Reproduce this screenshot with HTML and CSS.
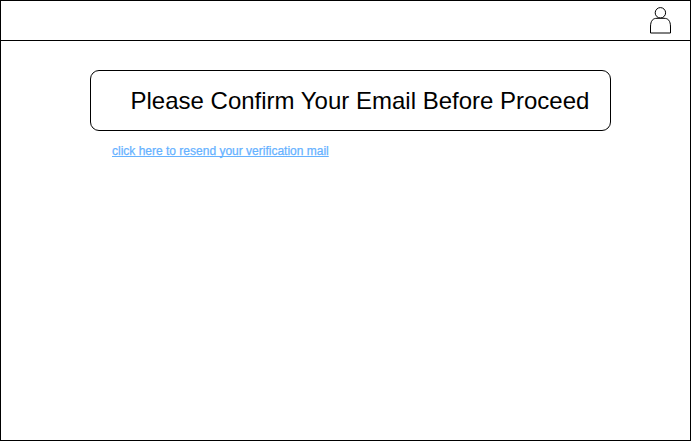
FILE: index.html
```html
<!DOCTYPE html>
<html lang="en">
<head>
<meta charset="utf-8">
<title>Confirm Email</title>
<link rel="stylesheet" href="styles.css">
</head>
<body>
<div class="window">
  <header class="topbar">
    <svg class="user" width="23" height="28" viewBox="0 0 23 28" aria-hidden="true">
      <circle cx="11.4" cy="5.8" r="5.2"/>
      <path d="M1.5 26V20C1.5 13.5 4 11.3 8 11.3H15C19 11.3 21.5 13.5 21.5 20V26Z"/>
    </svg>
  </header>
  <main class="content">
    <h1 class="notice">Please Confirm Your Email Before Proceed</h1>
    <a class="resend" href="#">click here to resend your verification mail</a>
  </main>
</div>
</body>
</html>
```

FILE: styles.css
```css
* { box-sizing: border-box; }
body {
  margin: 0;
  background: #fff;
  color: #000;
  font-family: "Liberation Sans", Arial, sans-serif;
}
.window {
  width: 691px;
  height: 441px;
  border: 1px solid #000;
}
.topbar {
  display: flex;
  justify-content: flex-end;
  height: 40px;
  padding: 6px 18px 0 0;
  border-bottom: 1px solid #000;
}
.user { fill: #fff; stroke: #000; stroke-width: 1; }
.content {
  display: flex;
  flex-direction: column;
  align-items: flex-start;
  padding: 29px 0 0 89px;
}
.notice {
  width: 521px;
  height: 61px;
  margin: 0;
  padding-left: 39.5px;
  border: 1px solid #000;
  border-radius: 9px;
  font-size: 24px;
  font-weight: 400;
  line-height: 59px;
  white-space: nowrap;
}
.resend {
  margin: 13px 0 0 22px;
  color: #66b2ff;
  font-size: 12px;
  line-height: 14px;
  text-decoration-skip-ink: none;
  -webkit-text-stroke: 0.25px #66b2ff;
}
```
